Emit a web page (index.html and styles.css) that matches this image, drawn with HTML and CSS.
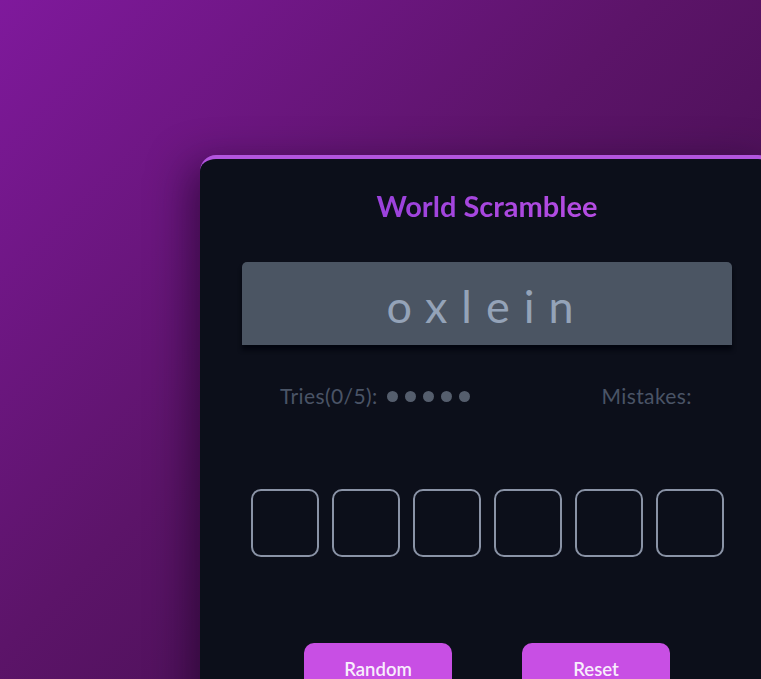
FILE: index.html
```html
<!DOCTYPE html>
<html lang="en">
<head>
<meta charset="utf-8">
<title>World Scramblee</title>
<link rel="stylesheet" href="styles.css">
</head>
<body>
<main class="stage">
  <section class="card">
    <h1 class="title">World Scramblee</h1>
    <div class="scrambled">oxlein</div>
    <div class="status">
      <div class="tries">
        <span>Tries(0/5):</span>
        <span class="dots"><i></i><i></i><i></i><i></i><i></i></span>
      </div>
      <div class="mistakes">Mistakes:</div>
    </div>
    <div class="slots">
      <div class="slot"></div><div class="slot"></div><div class="slot"></div>
      <div class="slot"></div><div class="slot"></div><div class="slot"></div>
    </div>
    <div class="actions">
      <button class="btn">Random</button>
      <button class="btn">Reset</button>
    </div>
  </section>
</main>
</body>
</html>
```

FILE: styles.css
```css
* { box-sizing: border-box; }
html, body {
  margin: 0;
  height: 100%;
  overflow: hidden;
}
body {
  font-family: "Lato", "Noto Sans", sans-serif;
  background: linear-gradient(135deg, #7f199c 0%, #5c1469 45%, #370c40 100%);
}
.stage {
  padding: 155px 0 0 200px;
  width: 1000px;
}
.card {
  width: 574px;
  height: 700px;
  background: #0c0f1a;
  border-top: 4px solid #b255de;
  border-radius: 16px;
  padding: 31px 42px 0;
  box-shadow: -10px 10px 40px rgba(20, 0, 30, 0.55);
}
.title {
  margin: 0;
  text-align: center;
  font-size: 29px;
  line-height: 32px;
  font-weight: 700;
  background: linear-gradient(90deg, #8a3bd8, #c653e6);
  -webkit-background-clip: text;
  background-clip: text;
  color: transparent;
}
.scrambled {
  margin-top: 40px;
  height: 83px;
  background: #4b5563;
  border-radius: 5px 5px 0 0;
  box-shadow: 0 5px 4px #03060f;
  color: #94a3b8;
  font-size: 45px;
  letter-spacing: 14px;
  text-align: center;
  line-height: 88px;
}
.status {
  margin-top: 39px;
  padding: 0 40px 0 38px;
  display: flex;
  justify-content: space-between;
  align-items: center;
  font-size: 21px;
  letter-spacing: 0.4px;
  line-height: 24px;
  color: #4a5466;
}
.tries {
  display: flex;
  align-items: center;
  gap: 9px;
}
.dots {
  display: flex;
  gap: 7px;
}
.dots i {
  width: 11px;
  height: 11px;
  border-radius: 50%;
  background: #555e6d;
}
.slots {
  margin-top: 81px;
  display: flex;
  justify-content: center;
  gap: 13px;
}
.slot {
  width: 68px;
  height: 68px;
  border: 2px solid #8a93a6;
  border-radius: 10px;
}
.actions {
  margin-top: 86px;
  display: flex;
  justify-content: center;
  gap: 70px;
}
.btn {
  width: 148px;
  height: 52px;
  border: none;
  border-radius: 10px;
  background: #c84fe4;
  color: #f8eefc;
  font-family: inherit;
  font-size: 18.5px;
  font-weight: 600;
  padding: 0;
}
```
